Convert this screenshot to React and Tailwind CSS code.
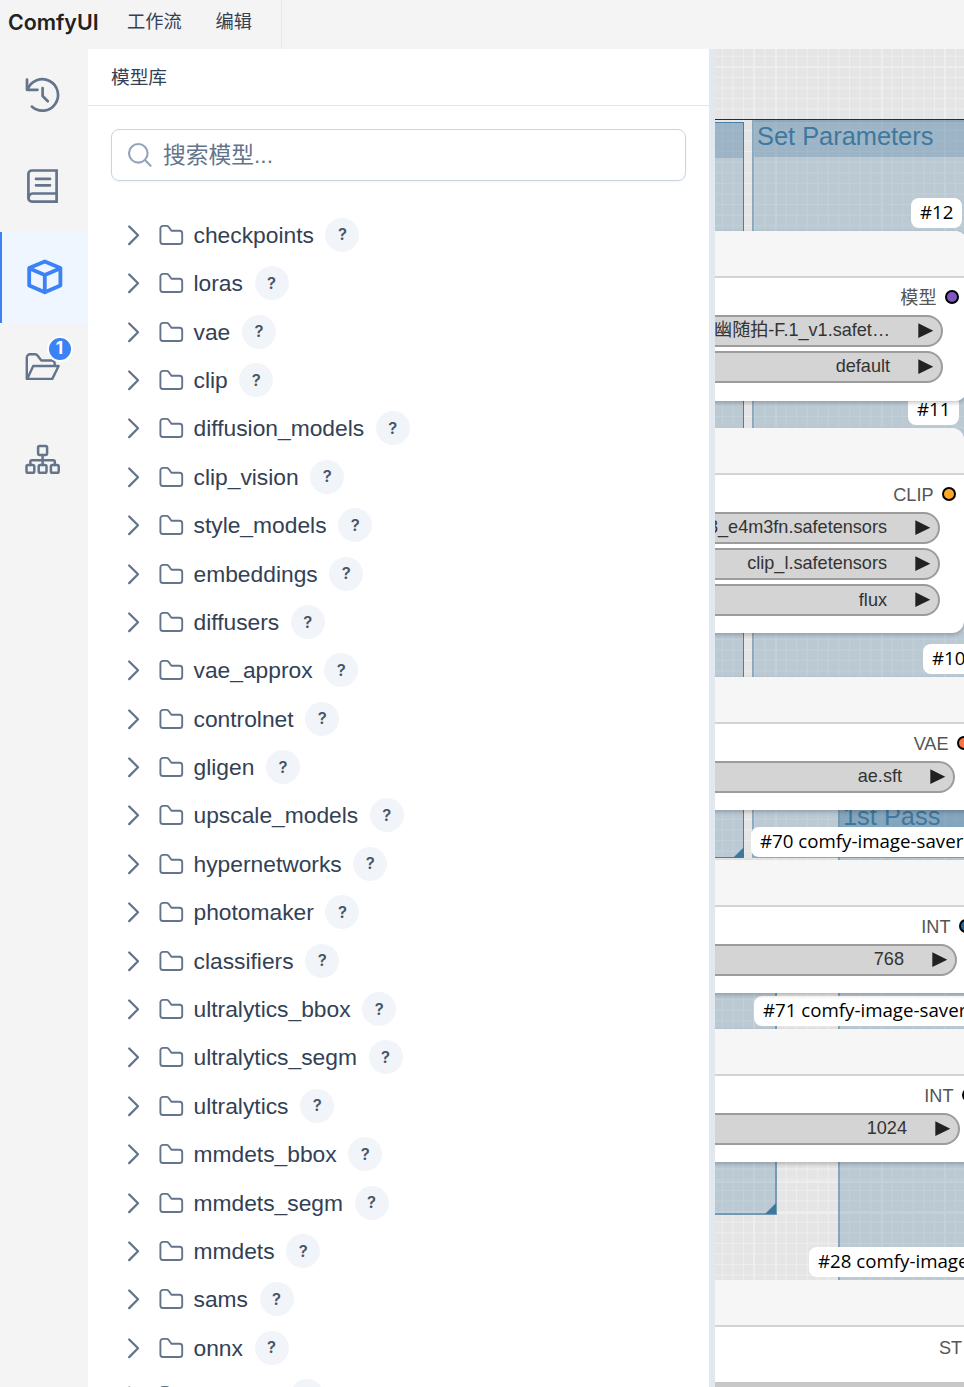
import React, { useState } from "react";

const folders = [
  "checkpoints",
  "loras",
  "vae",
  "clip",
  "diffusion_models",
  "clip_vision",
  "style_models",
  "embeddings",
  "diffusers",
  "vae_approx",
  "controlnet",
  "gligen",
  "upscale_models",
  "hypernetworks",
  "photomaker",
  "classifiers",
  "ultralytics_bbox",
  "ultralytics_segm",
  "ultralytics",
  "mmdets_bbox",
  "mmdets_segm",
  "mmdets",
  "sams",
  "onnx",
  "instantid",
];

const nodes = [
  {
    id: "12",
    box: "top-[182px] w-[272px] h-[170px]",
    output: "模型",
    dot: "bg-[#7e57c2]",
    widgets: ["幽随拍-F.1_v1.safet…", "default"],
  },
  {
    id: "11",
    box: "top-[379px] w-[269px] h-[205px]",
    output: "CLIP",
    dot: "bg-[#ffa726]",
    widgets: ["t5xxl_fp8_e4m3fn.safetensors", "clip_l.safetensors", "flux"],
  },
  {
    id: "10",
    box: "top-[628px] w-[284px] h-[133px]",
    output: "VAE",
    dot: "bg-[#ff7043]",
    widgets: ["ae.sft"],
  },
  {
    id: "70",
    box: "top-[811px] w-[286px] h-[133px]",
    output: "INT",
    dot: "bg-[#29699c]",
    widgets: ["768"],
  },
  {
    id: "71",
    box: "top-[980px] w-[289px] h-[133px]",
    output: "INT",
    dot: "bg-[#29699c]",
    widgets: ["1024"],
  },
];

const badges = [
  { text: "#12", box: "left-[196px] top-[149px] w-[51px]" },
  { text: "#11", box: "left-[193px] top-[346px] w-[51px]" },
  { text: "#10", box: "left-[208px] top-[595px] w-[51px]" },
  { text: "#70 comfy-image-saver", box: "left-[36px] top-[778px] w-[240px]" },
  { text: "#71 comfy-image-saver", box: "left-[39px] top-[947px] w-[240px]" },
  { text: "#28 comfy-image-saver", box: "left-[94px] top-[1198px] w-[240px]" },
];

const iconProps = {
  width: 38,
  height: 38,
  viewBox: "0 0 38 38",
  fill: "none",
  stroke: "currentColor",
  strokeWidth: 2.7,
  strokeLinecap: "round",
  strokeLinejoin: "round",
};

const HistoryIcon = () => (
  <svg {...iconProps}>
    <path d="M3 3.5v10.3h10.5" />
    <path d="M3.6 13.5A15.7 15.7 0 1 1 7.8 30.6" />
    <path d="M18.6 12v8l5.2 5.2" />
  </svg>
);

const BookIcon = () => (
  <svg {...iconProps}>
    <path d="M32.6 3.5H8a3.6 3.6 0 0 0-3.6 3.6v24A3.6 3.6 0 0 0 8 34.7h24.6V3.5Z" strokeLinejoin="miter" />
    <path d="M4.6 30.4A4.2 4.2 0 0 1 8.6 26.5h24" />
    <path d="M12 11.9h14M12 18.3h14" />
  </svg>
);

const BoxIcon = () => (
  <svg {...iconProps} strokeWidth={3.8}>
    <path d="M18.8 3.4 34.4 10v17.4L18.8 34.3 3.2 27.4V10L18.8 3.4Z" />
    <path d="M3.6 10.4 18.8 17 34 10.4M18.8 17v17" />
  </svg>
);

const FolderOpenIcon = () => (
  <svg {...iconProps} strokeWidth={2.4}>
    <path d="M2.8 28.9V7.5a3.2 3.2 0 0 1 3.2-3.2h5.2c1 0 1.7.4 2.3 1.2l3.8 5h10.4a3 3 0 0 1 3 3v2.2" />
    <path d="M3.2 28.9 9.2 16h25.4l-6.3 12.9H3.2Z" />
  </svg>
);

const SitemapIcon = () => (
  <svg {...iconProps} strokeWidth={2.5}>
    <rect x="14.1" y="4.9" width="9" height="9" rx="1.6" />
    <rect x="2.5" y="24" width="7.8" height="7.8" rx="1.6" />
    <rect x="14.7" y="24" width="7.8" height="7.8" rx="1.6" />
    <rect x="26.9" y="24" width="7.8" height="7.8" rx="1.6" />
    <path d="M18.6 13.9V24M6.4 24v-3.4a1.4 1.4 0 0 1 1.4-1.4h21.6a1.4 1.4 0 0 1 1.4 1.4V24" />
  </svg>
);

const FolderIcon = () => (
  <svg
    className="shrink-0"
    width="26"
    height="22"
    viewBox="0 0 26 22"
    fill="none"
    stroke="currentColor"
    strokeWidth="1.9"
    strokeLinejoin="round"
  >
    <path d="M5 1.9h3.8c.7 0 1.2.3 1.7.9l2.9 3.9h8.2a2.6 2.6 0 0 1 2.6 2.6v8.1a2.6 2.6 0 0 1-2.6 2.6H5a2.6 2.6 0 0 1-2.6-2.6V4.5A2.6 2.6 0 0 1 5 1.9Z" />
  </svg>
);

const ChevronIcon = () => (
  <svg
    className="shrink-0"
    width="14"
    height="22"
    viewBox="0 0 14 22"
    fill="none"
    stroke="currentColor"
    strokeWidth="2.3"
    strokeLinecap="round"
    strokeLinejoin="round"
  >
    <path d="m3.2 2.5 8.8 8.8-8.8 8.8" />
  </svg>
);

const tabs = [
  { id: "history", icon: <HistoryIcon /> },
  { id: "nodes", icon: <BookIcon /> },
  { id: "models", icon: <BoxIcon /> },
  { id: "workflows", icon: <FolderOpenIcon />, badge: 1 },
  { id: "tree", icon: <SitemapIcon /> },
];

const Header = () => (
  <header className="flex h-[49px] shrink-0 bg-[#f4f4f4]">
    <div className="flex w-[282px] items-center border-r border-[#e2e8f0] pb-[5px] pl-[8px]">
      <span className="w-[119px] font-['Inter'] text-[21.4px] font-semibold text-[#222]">
        ComfyUI
      </span>
      <span className="w-[88.5px] pt-[2px] text-[18.2px] text-[#334155]">工作流</span>
      <span className="pt-[2px] text-[18.2px] text-[#334155]">编辑</span>
    </div>
  </header>
);

const Sidebar = ({ active, onSelect }) => (
  <nav className="flex w-[88px] shrink-0 flex-col bg-[#f4f4f4]">
    {tabs.map((tab) => (
      <button
        key={tab.id}
        onClick={() => onSelect(tab.id)}
        className={
          active === tab.id
            ? "flex h-[91.3px] items-center justify-center border-l-2 border-[#3b82f6] bg-[#eff6ff] pr-px text-[#3b82f6]"
            : "flex h-[91.3px] items-center justify-center pr-[3px] text-[#64748b]"
        }
      >
        <span className="relative">
          {tab.icon}
          {tab.badge && (
            <span className="absolute -top-[14px] left-[23px] flex h-[26px] w-[26px] items-center justify-center rounded-full border-2 border-white bg-[#3b82f6] font-['Inter'] text-[17px] font-bold text-white">
              {tab.badge}
            </span>
          )}
        </span>
      </button>
    ))}
  </nav>
);

const ModelLibrary = () => (
  <section className="flex w-[621px] shrink-0 flex-col overflow-hidden bg-white">
    <div className="flex h-[57px] shrink-0 items-center border-b border-[#e2e8f0] pt-[3px] pl-[23px] text-[18.7px] text-[#334155]">
      模型库
    </div>
    <div className="mx-[23px] mt-[23px] flex h-[52px] shrink-0 items-center rounded-lg border border-[#cbd5e1] pl-[15px] shadow-xs">
      <svg
        width="26"
        height="26"
        viewBox="0 0 26 26"
        fill="none"
        stroke="#94a3b8"
        strokeWidth="2.1"
        strokeLinecap="round"
      >
        <circle cx="11.3" cy="11.3" r="9.3" />
        <path d="m18 18 5.6 5.8" />
      </svg>
      <input
        className="ml-[10px] flex-1 pt-px text-[22.75px] outline-none placeholder:text-[#64748b]"
        placeholder="搜索模型..."
      />
    </div>
    <ul className="mt-[29.6px] flex flex-col text-[#64748b]">
      {folders.map((name) => (
        <li key={name} className="flex h-[48.4px] shrink-0 items-center pl-[38px]">
          <ChevronIcon />
          <span className="ml-[18px]">
            <FolderIcon />
          </span>
          <span className="ml-[9.5px] text-[22.8px] leading-[30px] text-[#334155]">{name}</span>
          <span className="ml-[11.6px] flex h-[34px] w-[34px] items-center justify-center rounded-full bg-[#f1f5f9] font-['Inter'] text-[16.5px] font-semibold text-[#475569]">
            ?
          </span>
        </li>
      ))}
    </ul>
  </section>
);

const Grid = () => (
  <svg className="absolute inset-0 h-full w-full" shapeRendering="crispEdges">
    <defs>
      <pattern id="cells" x="6.9" y="6.7" width="10.6" height="10.6" patternUnits="userSpaceOnUse">
        <path d="M.5 0v10.6M0 .5h10.6" stroke="#eeeeee" strokeWidth="1" />
      </pattern>
    </defs>
    <rect width="100%" height="100%" fill="#e5e5e5" />
    <rect width="100%" height="100%" fill="url(#cells)" />
    <path
      d="M39 0v1338M61 0v1338M167 0v1338M230 0v1338M0 18h249M0 1133h249M0 1164h249"
      stroke="#eeeeee"
      strokeWidth="2"
    />
  </svg>
);

const Widget = ({ value }) => (
  <div className="mr-[24px] flex h-[32px] items-center justify-end rounded-r-full border-2 border-[#9c9c9c] bg-[#d4d4d4] pr-[7px] text-[18.1px] whitespace-nowrap text-[#333]">
    {value}
    <svg className="ml-[28px] shrink-0" width="16" height="16" viewBox="0 0 16 16">
      <path d="M.3.3v14.8L15.3 7.7Z" fill="#222" />
    </svg>
  </div>
);

const GraphNode = ({ node }) => (
  <div className={`absolute -left-[20px] flex flex-col rounded-xl bg-white shadow-[0_2px_4px_rgba(0,0,0,0.22)] ${node.box}`}>
    <div className="h-[47px] shrink-0 rounded-t-xl border-b-2 border-[#d3d3d3] bg-[#f6f6f6]" />
    <div className="flex h-[36.6px] shrink-0 items-center justify-end pr-[8.5px] text-[18.1px] text-[#555]">
      <span className="pt-[5px]">{node.output}</span>
      <span className={`mt-[2px] ml-[8px] h-[14px] w-[14px] rounded-full border-2 border-black ${node.dot}`} />
    </div>
    <div className="flex flex-col gap-[4.3px]">
      {node.widgets.map((value) => (
        <Widget key={value} value={value} />
      ))}
    </div>
  </div>
);

const Canvas = () => (
  <main className="relative flex-1 overflow-hidden">
    <Grid />
    {/* groups */}
    <div className="absolute -left-[10px] top-[73px] h-[736px] w-[39px] border border-[#4680a8] bg-[#3f789e]/25">
      <div className="h-[35px] bg-[#3f789e]/25" />
    </div>
    <div className="absolute left-[37px] top-[71px] h-[738px] w-[260px] border-2 border-[#3f789e]/55 bg-[#3f789e]/25 bg-clip-padding">
      <div className="h-[35px] bg-[#3f789e]/25 pl-[3px] text-[25.4px] leading-[28px] whitespace-nowrap text-[#3f789e]">
        Set Parameters
      </div>
    </div>
    <div className="absolute top-[70px] h-px w-full bg-[#1e2b4d]" />
    <div className="absolute left-[123px] top-[750px] h-[640px] w-[200px] border-l-2 border-[#3f789e]/60 bg-[#3f789e]/25 bg-clip-padding">
      <div className="h-[36px] bg-[#3f789e]/25 pl-[3px] text-[25.4px] leading-[34px] whitespace-nowrap text-[#3f789e]">
        1st Pass
      </div>
    </div>
    <div className="absolute -left-[10px] top-[820px] h-[346px] w-[72px] border-r-2 border-b-2 border-[#3f789e]/70 bg-[#3f789e]/25 bg-clip-padding" />
    <svg className="absolute left-[18px] top-[798px]" width="11" height="11">
      <path d="M11 0v11H0Z" fill="#3f789e" />
    </svg>
    <svg className="absolute left-[50px] top-[1154px]" width="11" height="11">
      <path d="M11 0v11H0Z" fill="#3f789e" />
    </svg>

    {badges.map((badge) => (
      <div
        key={badge.text}
        className={`absolute flex h-[30px] items-center rounded-lg bg-white pb-[2px] pl-[9px] font-['Open_Sans'] text-[18.7px] whitespace-nowrap text-black ${badge.box}`}
      >
        {badge.text}
      </div>
    ))}

    {nodes.map((node) => (
      <GraphNode key={node.id} node={node} />
    ))}

    <div className="absolute top-[1231px] flex h-[120px] w-full flex-col bg-white">
      <div className="h-[47px] shrink-0 border-b-2 border-[#d3d3d3] bg-[#f6f6f6]" />
      <div className="flex h-[55px] shrink-0 items-start pt-[8px] pl-[224px] text-[18.1px] text-[#555]">
        ST
      </div>
      <div className="flex-1 bg-[#c8c8c8]" />
    </div>
  </main>
);

const App = () => {
  const [active, setActive] = useState("models");

  return (
    <div className="flex h-[1387px] w-[964px] flex-col overflow-hidden bg-white font-['Liberation_Sans','Noto_Sans_CJK_SC',sans-serif]">
      <Header />
      <div className="flex min-h-0 flex-1">
        <Sidebar active={active} onSelect={setActive} />
        <ModelLibrary />
        <div className="w-[6px] shrink-0 bg-[#e2e8f0]" />
        <Canvas />
      </div>
    </div>
  );
};

export default App;
